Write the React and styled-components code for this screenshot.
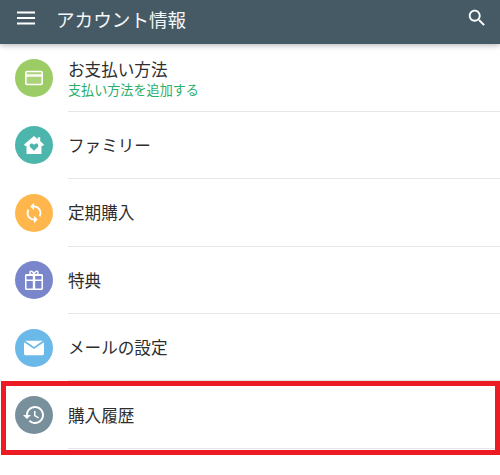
import React from "react";
import styled, { createGlobalStyle } from "styled-components";

const Global = createGlobalStyle`
  html, body { margin: 0; padding: 0; background: #fff; }
  body { font-family: "Roboto", "Noto Sans CJK JP", sans-serif; width: 500px; height: 475px; overflow: hidden; }
`;

const Page = styled.div`
  position: relative;
  width: 500px;
  height: 475px;
  background: #fff;
  overflow: hidden;
`;

const Toolbar = styled.header`
  position: relative;
  z-index: 1;
  display: flex;
  align-items: center;
  height: 44px;
  padding: 0 11.75px 0 16px;
  box-sizing: border-box;
  background: #465a65;
  box-shadow: 0 1px 6px rgba(0, 0, 0, 0.32);
`;

const MenuButton = styled.svg`
  width: 20px;
  height: 20px;
  margin-right: 20px;
  margin-top: -8px;
  fill: #fff;
  flex: none;
`;

const Title = styled.h1`
  flex: 1;
  margin: -7px 0 0;
  font: 400 18.6px/26px "Noto Sans CJK JP", sans-serif;
  color: #f4f6f7;
`;

const SearchButton = styled.svg`
  width: 22px;
  height: 22px;
  margin-top: -7.5px;
  fill: #fff;
  flex: none;
`;

const List = styled.ul`
  list-style: none;
  margin: 0;
  padding: 0.4px 0 0;
`;

const Row = styled.li`
  display: flex;
  align-items: center;
  height: 67.4px;
  padding-left: 15px;
  box-sizing: border-box;
`;

const Badge = styled.span`
  display: flex;
  align-items: center;
  justify-content: center;
  width: 38px;
  height: 38px;
  border-radius: 50%;
  flex: none;
  background: ${(p) => p.$color};
  svg { display: block; width: 24px; height: 24px; fill: #fff; }
`;

const Body = styled.div`
  flex: 1;
  align-self: stretch;
  display: flex;
  flex-direction: column;
  justify-content: center;
  margin-left: 15px;
  border-bottom: 1px solid #e6e6e6;
`;

const Label = styled.div`
  font: 400 16.6px/22px "Noto Sans CJK JP", sans-serif;
  color: #2e2e2e;
`;

const Sub = styled.div`
  margin-top: 2px;
  font: 400 13.1px/16px "Noto Sans CJK JP", sans-serif;
  color: #27ae6b;
`;

const Highlight = styled.div`
  position: absolute;
  left: 1px;
  top: 381px;
  width: 499px;
  height: 74px;
  box-sizing: border-box;
  border: 5px solid #ed1c24;
  pointer-events: none;
`;

const CardIcon = () => (
  <svg viewBox="0 0 24 24">
    <rect x="3.8" y="5.5" width="16.4" height="13" rx="1.2" fill="#fff" fillOpacity="0.14" stroke="#fff" strokeWidth="1.6" />
    <rect x="4" y="8.2" width="16" height="2.6" opacity="0.9" />
  </svg>
);
const HomeIcon = () => (
  <svg viewBox="-1.5 -1.5 27 27"><path fillRule="evenodd" d="M12 1.8 16.2 5.4V3.4H19V7.8L23.2 11.5 22 13H20.4V22H3.6V13H2L.8 11.5ZM12 18.6 16.2 14.4C17.6 12.8 16.6 10.4 14.7 10.4 13.6 10.4 12.7 11 12 12 11.3 11 10.4 10.4 9.3 10.4 7.4 10.4 6.4 12.8 7.8 14.4Z"/></svg>
);
const SyncIcon = () => (
  <svg viewBox="-1 -1 26 26"><path d="M12 4V1L8 5l4 4V6c3.31 0 6 2.69 6 6 0 1.01-.25 1.97-.7 2.8l1.46 1.46C19.54 15.03 20 13.57 20 12c0-4.42-3.58-8-8-8zm0 14c-3.31 0-6-2.69-6-6 0-1.01.25-1.97.7-2.8L5.24 7.74C4.46 8.97 4 10.43 4 12c0 4.42 3.58 8 8 8v3l4-4-4-4v3z"/></svg>
);
const GiftIcon = () => (
  <svg viewBox="0 0 24 24"><path fillRule="evenodd" d="M3 7.5C3 6.7 3.7 6 4.5 6H7.6C6.6 4.6 7.4 2.4 9.2 2.4 10.4 2.4 11.4 3.2 12 4.4 12.6 3.2 13.6 2.4 14.8 2.4 16.6 2.4 17.4 4.6 16.4 6H19.500C20.300 6 21 6.700 21 7.500V20.500C21 21.300 20.300 22 19.500 22H4.500C3.700 22 3 21.300 3 20.500ZM4.500 8V11.500H10.800V8ZM13.200 8V11.500H19.500V8ZM4.500 13V20.500H10.800V13ZM13.200 13V20.500H19.500V13ZM9.200 4C8.200 4 8.400 6 10 6H11C10.800 5 10.200 4 9.200 4ZM14.800 4C13.800 4 13.200 5 13 6H14C15.600 6 15.800 4 14.800 4Z"/></svg>
);
const MailIcon = () => (
  <svg viewBox="0 0 24 24">
    <path d="M3.200 4.800H20.800L12 10.900Z" />
    <path d="M2 6.200 12 13 22 6.200V17.600C22 18.500 21.400 19.200 20.500 19.200H3.500C2.600 19.200 2 18.500 2 17.600Z" />
  </svg>
);
const HistoryIcon = () => (
  <svg viewBox="0 0 24 24"><path d="M13 3c-4.970 0-9 4.030-9 9H1l3.890 3.890.07.140L9 12H6c0-3.870 3.130-7 7-7s7 3.130 7 7-3.130 7-7 7c-1.930 0-3.680-.79-4.940-2.060l-1.420 1.420C8.270 19.990 10.510 21 13 21c4.970 0 9-4.030 9-9s-4.030-9-9-9zm-1 5v5l4.280 2.540.72-1.210-3.500-2.080V8H12z"/></svg>
);

const rows = [
  { label: "お支払い方法", sub: "支払い方法を追加する", color: "#9ccc65", icon: <CardIcon /> },
  { label: "ファミリー", color: "#4db6ac", icon: <HomeIcon /> },
  { label: "定期購入", color: "#ffb74d", icon: <SyncIcon /> },
  { label: "特典", color: "#7986cb", icon: <GiftIcon /> },
  { label: "メールの設定", color: "#6bb9e8", icon: <MailIcon /> },
  { label: "購入履歴", color: "#78909c", icon: <HistoryIcon /> },
];

export default function App() {
  return (
    <Page>
      <Global />
      <Toolbar>
        <MenuButton viewBox="0 0 20 20"><path d="M1 3.500h18v2H1zM1 9h18v2H1zM1 14.500h18v2H1z" /></MenuButton>
        <Title>アカウント情報</Title>
        <SearchButton viewBox="0 0 24 24"><path d="M15.500 14h-.79l-.28-.27C15.410 12.590 16 11.110 16 9.500 16 5.910 13.090 3 9.500 3S3 5.910 3 9.500 5.910 16 9.500 16c1.610 0 3.090-.59 4.230-1.570l.27.280v.79l5 4.990L20.490 19l-4.990-5zm-6 0C7.010 14 5 11.990 5 9.500S7.010 5 9.500 5 14 7.010 14 9.500 11.990 14 9.500 14z"/></SearchButton>
      </Toolbar>
      <List>
        {rows.map((r) => (
          <Row key={r.label}>
            <Badge $color={r.color}>{r.icon}</Badge>
            <Body>
              <Label>{r.label}</Label>
              {r.sub && <Sub>{r.sub}</Sub>}
            </Body>
          </Row>
        ))}
      </List>
      <Highlight />
    </Page>
  );
}
